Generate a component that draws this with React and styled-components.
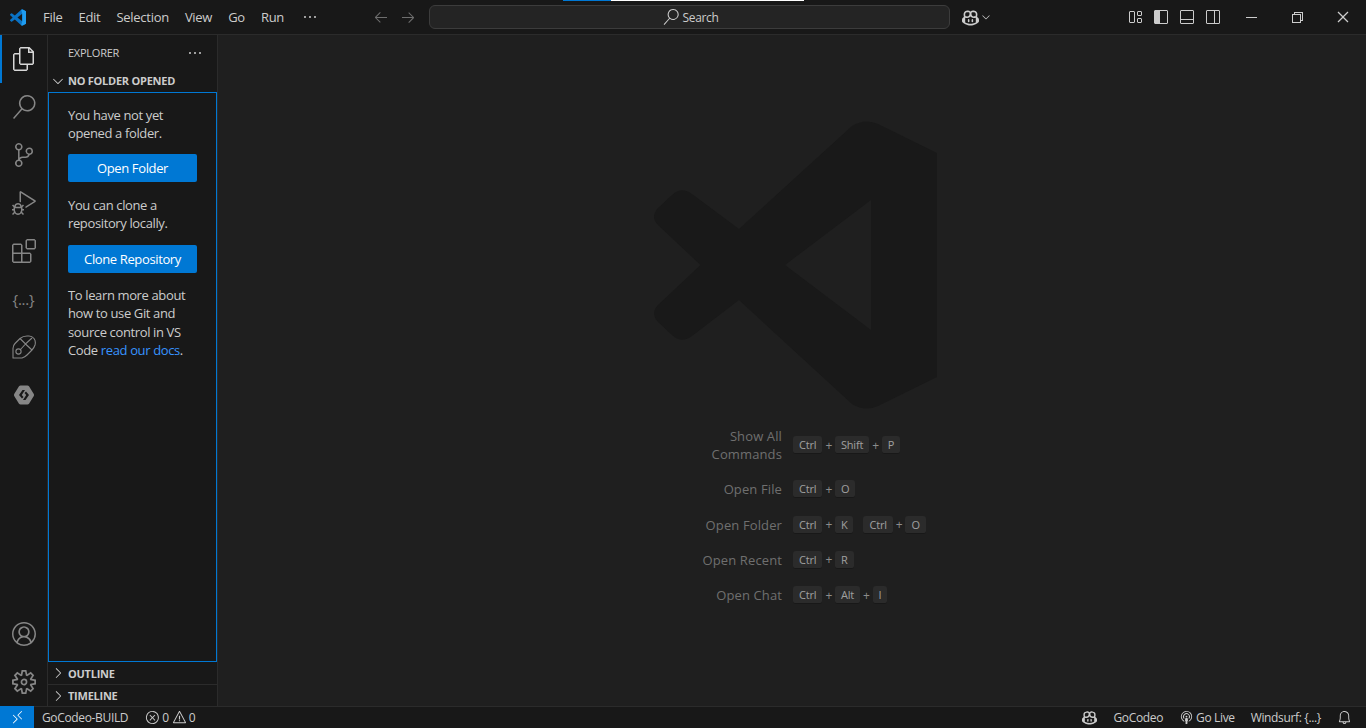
import React from "react";
import styled, { createGlobalStyle } from "styled-components";
import {
  VscFiles,
  VscSearch,
  VscSourceControl,
  VscDebugAlt,
  VscExtensions,
  VscAccount,
  VscSettingsGear,
  VscEllipsis,
  VscChevronDown,
  VscChevronRight,
  VscArrowLeft,
  VscArrowRight,
  VscCopilot,
  VscLayout,
  VscLayoutSidebarLeft,
  VscLayoutPanelOff,
  VscLayoutSidebarRightOff,
  VscChromeMinimize,
  VscChromeRestore,
  VscChromeClose,
  VscRemote,
  VscError,
  VscWarning,
  VscBroadcast,
  VscBell,
} from "react-icons/vsc";

const GlobalStyle = createGlobalStyle`
  html, body, #root {
    margin: 0;
    height: 100%;
  }
  body {
    background: #1f1f1f;
    color: #cccccc;
    font-family: "Open Sans", "Noto Sans", sans-serif;
    font-size: 13px;
    letter-spacing: -0.37px;
    overflow: hidden;
  }
`;

const Shell = styled.div`
  position: relative;
  height: 728px;
  display: flex;
  flex-direction: column;
`;

const Progress = styled.div`
  position: absolute;
  top: 0;
  left: 563px;
  width: 241px;
  height: 1px;
  background: linear-gradient(to right, #0078d4 48px, #ffffff 48px);
`;

const TitleBar = styled.header`
  height: 35px;
  box-sizing: border-box;
  flex: none;
  display: grid;
  grid-template-columns: 370px 59px 521px 1fr;
  align-items: center;
  background: #181818;
  border-bottom: 1px solid #2b2b2b;
`;

const TitleLeft = styled.div`
  display: flex;
  align-items: center;
`;

const LogoBox = styled.div`
  width: 35px;
  display: flex;
  justify-content: center;
`;

const MenuItem = styled.span`
  padding: 0 8px;
  line-height: 34px;
  letter-spacing: -0.28px;
  color: #cccccc;
  flex: none;
`;

const MenuDots = styled.span`
  margin-left: 10px;
  display: flex;
  color: #cccccc;
  font-size: 16px;
`;

const NavGroup = styled.div`
  display: flex;
  gap: 5px;
  color: #6e6e6e;
  font-size: 16px;
`;

const NavButton = styled.span`
  width: 22px;
  display: flex;
  justify-content: center;
`;

const SearchBox = styled.div`
  height: 22px;
  display: flex;
  align-items: center;
  justify-content: center;
  gap: 4px;
  padding-left: 2px;
  background: #242424;
  border: 1px solid #3c3c3c;
  border-radius: 6px;
  font-size: 12px;
  color: #cccccc;
  svg {
    font-size: 16px;
  }
`;

const TitleRight = styled.div`
  display: flex;
  align-items: center;
  height: 34px;
`;

const CopilotMenu = styled.div`
  display: flex;
  align-items: center;
  margin-left: 12px;
  gap: 1px;
  color: #cccccc;
  font-size: 17px;
  svg + svg {
    font-size: 12px;
  }
`;

const LayoutGroup = styled.div`
  margin-left: auto;
  display: flex;
  gap: 4px;
  margin-right: 4px;
  font-size: 16px;
  color: #cccccc;
`;

const LayoutButton = styled.span`
  width: 22px;
  display: flex;
  justify-content: center;
`;

const WindowButton = styled.span`
  width: 46px;
  display: flex;
  justify-content: center;
  color: #cccccc;
  font-size: 16px;
`;

const Body = styled.div`
  flex: 1;
  min-height: 0;
  display: flex;
`;

const ActivityBar = styled.nav`
  width: 47px;
  flex: none;
  display: flex;
  flex-direction: column;
  justify-content: space-between;
  background: #181818;
  border-right: 1px solid #2b2b2b;
`;

const ActivityGroup = styled.div`
  display: flex;
  flex-direction: column;
`;

const ActivityItem = styled.div`
  height: 48px;
  display: flex;
  align-items: center;
  justify-content: center;
  font-size: 24px;
  color: ${(props) => (props.$active ? "#d7d7d7" : "#868686")};
  box-shadow: ${(props) => (props.$active ? "inset 2px 0 0 #0078d4" : "none")};
`;

const BraceGlyph = styled.span`
  font-size: 15px;
  line-height: 16px;
  letter-spacing: -0.2px;
  color: #868686;
`;

const SideBar = styled.aside`
  width: 169px;
  flex: none;
  display: flex;
  flex-direction: column;
  background: #181818;
  border-right: 1px solid #2b2b2b;
`;

const SideHeader = styled.div`
  height: 35px;
  flex: none;
  display: flex;
  align-items: center;
  justify-content: space-between;
  padding: 0 14px 0 20px;
  font-size: 11px;
  letter-spacing: -0.25px;
  svg {
    font-size: 16px;
  }
`;

const SectionHeader = styled.div`
  height: 22px;
  flex: none;
  display: flex;
  align-items: center;
  font-size: 11px;
  font-weight: 700;
  letter-spacing: -0.25px;
  color: #cccccc;
  border-top: ${(props) => (props.$divided ? "1px solid #2b2b2b" : "none")};
  box-sizing: border-box;
  svg {
    width: 20px;
    font-size: 16px;
    flex: none;
  }
`;

const SectionTitle = styled.span`
  position: relative;
  top: ${(props) => (props.$lifted ? "-1px" : "0")};
`;

const EmptyPane = styled.div`
  flex: 1;
  min-height: 0;
  padding: 12.8px 19px 0 19px;
  border: 1px solid #0078d4;
`;

const PaneText = styled.p`
  margin: 0 0 12.2px;
  line-height: 18.2px;
  color: #cccccc;
`;

const PaneLink = styled.a`
  color: #3794ff;
`;

const PaneButton = styled.button`
  display: block;
  width: 129px;
  height: 28px;
  margin: 0 0 13.6px;
  padding: 0;
  border: none;
  border-radius: 2px;
  background: #0078d4;
  color: #ffffff;
  font: inherit;
  letter-spacing: inherit;
`;

const Editor = styled.main`
  flex: 1;
  min-width: 0;
  display: flex;
  flex-direction: column;
  background: #1f1f1f;
`;

const Watermark = styled.svg`
  display: block;
  width: 283px;
  height: 290px;
  margin: 85px 0 17px 436px;
  fill: #191919;
`;

const Shortcuts = styled.div`
  display: flex;
  flex-direction: column;
  gap: 17.3px;
  padding-right: 9px;
`;

const ShortcutRow = styled.div`
  display: grid;
  grid-template-columns: 1fr 1fr;
  column-gap: 11px;
  align-items: center;
`;

const ShortcutLabel = styled.div`
  justify-self: end;
  max-width: 100px;
  text-align: right;
  font-size: 13px;
  line-height: 18px;
  letter-spacing: 0.12px;
  color: #6f6f6f;
`;

const Keys = styled.div`
  display: flex;
  align-items: center;
`;

const Key = styled.kbd`
  height: 17px;
  padding: 0 6px;
  display: flex;
  align-items: center;
  font-family: inherit;
  font-size: 11px;
  letter-spacing: -0.2px;
  color: #a0a0a0;
  background: #2b2b2b;
  border-bottom: 1px solid #181818;
  border-radius: 3px;
`;

const Plus = styled.span`
  width: 12.6px;
  text-align: center;
  font-size: 12px;
  color: #8c8c8c;
`;

const ChordGap = styled.span`
  width: 10px;
`;

const StatusBar = styled.footer`
  height: 21px;
  flex: none;
  display: flex;
  align-items: center;
  background: #181818;
  border-top: 1px solid #2b2b2b;
  font-size: 12px;
  color: #cccccc;
`;

const RemoteButton = styled.div`
  width: 34px;
  height: 22px;
  margin-top: -1px;
  display: flex;
  align-items: center;
  justify-content: center;
  background: #0078d4;
  color: #ffffff;
  font-size: 15px;
`;

const StatusItem = styled.span`
  display: flex;
  align-items: center;
  gap: ${(props) => props.$gap || 4}px;
  margin-left: ${(props) => props.$left || 0}px;
  font-size: 12px;
  letter-spacing: -0.35px;
  white-space: nowrap;
  svg {
    font-size: 15px;
  }
`;

const StatusRight = styled.div`
  margin-left: auto;
  margin-right: 14px;
  display: flex;
  align-items: center;
`;

const menuItems = ["File", "Edit", "Selection", "View", "Go", "Run"];

const shortcuts = [
  { label: "Show All Commands", chords: [["Ctrl", "Shift", "P"]] },
  { label: "Open File", chords: [["Ctrl", "O"]] },
  { label: "Open Folder", chords: [["Ctrl", "K"], ["Ctrl", "O"]] },
  { label: "Open Recent", chords: [["Ctrl", "R"]] },
  { label: "Open Chat", chords: [["Ctrl", "Alt", "I"]] },
];

const LOGO_SHAPE =
  "M937 153 L878 124 Q865 118 852 126 L739 229 L692 194 Q681 186 672 195 L658 208 Q650 217 658 225 L700.5 265 L658 305 Q650 313 658 322 L672 335 Q681 344 692 336 L739 300 L852 404 Q865 412 878 406 L937 377 Z M871 200 L871 330 L785 265 Z";

const VsCodeLogo = () => (
  <svg width="16" height="17" viewBox="654 120 283 290">
    <path fillRule="evenodd" d={LOGO_SHAPE} fill="#0a72c4" />
    <path d="M937 153 L878 124 Q865 118 852 126 L871 200 L871 330 L852 404 Q865 412 878 406 L937 377 Z" fill="#1f9cf0" />
  </svg>
);

const GemIcon = () => (
  <svg width="24" height="24" viewBox="0 0 24 24" fill="none" stroke="currentColor" strokeWidth="1.1">
    <path d="M1 23V13.5Q1 10.5 3 8.5L8 3.5Q11 1 15 1H17Q20 1 22 3.5Q24 6 23 10Q22 13 20 15L15 20Q13 22 10 23Z" strokeLinejoin="round" />
    <path d="M8 3.5L13.5 9L20 3M13.5 9L20 15M13.5 9L8.5 14.5" />
    <circle cx="6.5" cy="16.5" r="2.6" />
  </svg>
);

const HexIcon = () => (
  <svg width="22" height="20" viewBox="0 0 22 20">
    <path
      fillRule="evenodd"
      fill="#868686"
      d="M6 1.2 Q6.6 0.5 7.5 0.5 H14.5 Q15.4 0.5 16 1.2 L20.8 9 Q21.3 10 20.8 11 L16 18.8 Q15.4 19.5 14.5 19.5 H7.5 Q6.6 19.5 6 18.8 L1.2 11 Q0.7 10 1.2 9 Z
         M12 5 H9.5 L6 10 L9 13.5 L10.5 12 L8.8 10 Z
         M10 15 H12.5 L16 10 L13 6.5 L11.5 8 L13.2 10 Z"
    />
  </svg>
);

export default function App() {
  return (
    <>
      <GlobalStyle />
      <Shell>
        <TitleBar>
          <TitleLeft>
            <LogoBox>
              <VsCodeLogo />
            </LogoBox>
            {menuItems.map((item) => (
              <MenuItem key={item}>{item}</MenuItem>
            ))}
            <MenuDots>
              <VscEllipsis />
            </MenuDots>
          </TitleLeft>
          <NavGroup>
            <NavButton>
              <VscArrowLeft />
            </NavButton>
            <NavButton>
              <VscArrowRight />
            </NavButton>
          </NavGroup>
          <SearchBox>
            <VscSearch />
            Search
          </SearchBox>
          <TitleRight>
            <CopilotMenu>
              <VscCopilot />
              <VscChevronDown />
            </CopilotMenu>
            <LayoutGroup>
              <LayoutButton>
                <VscLayout />
              </LayoutButton>
              <LayoutButton>
                <VscLayoutSidebarLeft />
              </LayoutButton>
              <LayoutButton>
                <VscLayoutPanelOff />
              </LayoutButton>
              <LayoutButton>
                <VscLayoutSidebarRightOff />
              </LayoutButton>
            </LayoutGroup>
            <WindowButton>
              <VscChromeMinimize />
            </WindowButton>
            <WindowButton>
              <VscChromeRestore />
            </WindowButton>
            <WindowButton>
              <VscChromeClose />
            </WindowButton>
          </TitleRight>
        </TitleBar>
        <Progress />

        <Body>
          <ActivityBar>
            <ActivityGroup>
              <ActivityItem $active>
                <VscFiles />
              </ActivityItem>
              <ActivityItem>
                <VscSearch />
              </ActivityItem>
              <ActivityItem>
                <VscSourceControl />
              </ActivityItem>
              <ActivityItem>
                <VscDebugAlt />
              </ActivityItem>
              <ActivityItem>
                <VscExtensions />
              </ActivityItem>
              <ActivityItem>
                <BraceGlyph>{"{...}"}</BraceGlyph>
              </ActivityItem>
              <ActivityItem>
                <GemIcon />
              </ActivityItem>
              <ActivityItem>
                <HexIcon />
              </ActivityItem>
            </ActivityGroup>
            <ActivityGroup>
              <ActivityItem>
                <VscAccount />
              </ActivityItem>
              <ActivityItem>
                <VscSettingsGear />
              </ActivityItem>
            </ActivityGroup>
          </ActivityBar>

          <SideBar>
            <SideHeader>
              EXPLORER
              <VscEllipsis />
            </SideHeader>
            <SectionHeader>
              <VscChevronDown />
              <SectionTitle $lifted>NO FOLDER OPENED</SectionTitle>
            </SectionHeader>
            <EmptyPane>
              <PaneText>You have not yet opened a folder.</PaneText>
              <PaneButton>Open Folder</PaneButton>
              <PaneText>You can clone a repository locally.</PaneText>
              <PaneButton>Clone Repository</PaneButton>
              <PaneText>
                To learn more about how to use Git and source control in VS Code{" "}
                <PaneLink>read our docs</PaneLink>.
              </PaneText>
            </EmptyPane>
            <SectionHeader>
              <VscChevronRight />
              <SectionTitle>OUTLINE</SectionTitle>
            </SectionHeader>
            <SectionHeader $divided>
              <VscChevronRight />
              <SectionTitle>TIMELINE</SectionTitle>
            </SectionHeader>
          </SideBar>

          <Editor>
            <Watermark viewBox="654 120 283 290">
              <path fillRule="evenodd" d={LOGO_SHAPE} />
            </Watermark>
            <Shortcuts>
              {shortcuts.map((shortcut) => (
                <ShortcutRow key={shortcut.label}>
                  <ShortcutLabel>{shortcut.label}</ShortcutLabel>
                  <Keys>
                    {shortcut.chords.map((chord, chordIndex) => (
                      <React.Fragment key={chordIndex}>
                        {chordIndex > 0 && <ChordGap />}
                        {chord.map((key, index) => (
                          <React.Fragment key={key}>
                            {index > 0 && <Plus>+</Plus>}
                            <Key>{key}</Key>
                          </React.Fragment>
                        ))}
                      </React.Fragment>
                    ))}
                  </Keys>
                </ShortcutRow>
              ))}
            </Shortcuts>
          </Editor>
        </Body>

        <StatusBar>
          <RemoteButton>
            <VscRemote />
          </RemoteButton>
          <StatusItem $left={8}>GoCodeo-BUILD</StatusItem>
          <StatusItem $left={17} $gap={2}>
            <VscError />0
          </StatusItem>
          <StatusItem $left={3} $gap={2}>
            <VscWarning />0
          </StatusItem>
          <StatusRight>
            <StatusItem>
              <VscCopilot />
            </StatusItem>
            <StatusItem $left={16}>GoCodeo</StatusItem>
            <StatusItem $left={16} $gap={2}>
              <VscBroadcast />
              Go Live
            </StatusItem>
            <StatusItem $left={16}>Windsurf: {"{...}"}</StatusItem>
            <StatusItem $left={16}>
              <VscBell />
            </StatusItem>
          </StatusRight>
        </StatusBar>
      </Shell>
    </>
  );
}
